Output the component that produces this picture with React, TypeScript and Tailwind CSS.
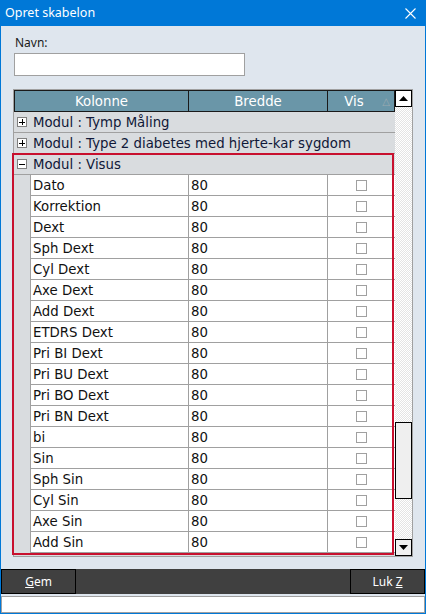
import React from "react";

const groups = ["Modul : Tymp Måling", "Modul : Type 2 diabetes med hjerte-kar sygdom"];
const rows = [
  "Dato", "Korrektion", "Dext", "Sph Dext", "Cyl Dext", "Axe Dext", "Add Dext", "ETDRS Dext",
  "Pri BI Dext", "Pri BU Dext", "Pri BO Dext", "Pri BN Dext", "bi", "Sin", "Sph Sin", "Cyl Sin",
  "Axe Sin", "Add Sin",
];

const gridFont = { fontFamily: '"DejaVu Sans", Verdana, sans-serif' } as const;

function PlusBox({ minus }: { minus?: boolean }) {
  return (
    <div className="w-[10px] h-[10px] border border-[#808080] bg-white flex items-center justify-center relative shrink-0">
      <div className="w-[6px] h-[1px] bg-black" />
      {!minus && <div className="absolute w-[1px] h-[6px] bg-black" />}
    </div>
  );
}

function GroupRow({ label, minus }: { label: string; minus?: boolean }) {
  return (
    <div className="h-[21px] shrink-0 flex items-center bg-[#d9dcdf] border-b border-[#a0a0a0] text-[#101838] text-[13.3px]">
      <div className="w-[19px] shrink-0 flex pl-[3px]">
        <PlusBox minus={minus} />
      </div>
      <span className="whitespace-nowrap pt-[1px]">{label}</span>
    </div>
  );
}

function DataRow({ label }: { label: string }) {
  return (
    <div className="h-[21px] shrink-0 flex bg-[#d9dcdf] text-[13.3px] text-[#111]">
      <div className="w-[16px] shrink-0" />
      <div className="flex flex-1 bg-white border-b border-[#a0a0a0]">
        <div className="w-[159px] shrink-0 border-l border-r border-[#a0a0a0] flex items-center pl-[2px] pt-[1px] whitespace-nowrap">
          {label}
        </div>
        <div className="w-[139px] shrink-0 border-r border-[#a0a0a0] flex items-center pl-[2px] pt-[1px]">80</div>
        <div className="flex-1 flex items-center justify-center">
          <div className="w-[11px] h-[11px] border border-[#a0a0a0] bg-white" />
        </div>
      </div>
    </div>
  );
}

function Arrow({ up }: { up?: boolean }) {
  return (
    <svg width="9" height="5" viewBox="0 0 9 5">
      {up ? <polygon points="0,5 9,5 4.5,0" fill="#000" /> : <polygon points="0,0 9,0 4.5,5" fill="#000" />}
    </svg>
  );
}

export default function App() {
  const ui = { fontFamily: '"Noto Sans", "Open Sans", sans-serif' } as const;
  return (
    <div className="w-[426px] h-[614px] bg-[#0078d7] flex flex-col overflow-hidden" style={ui}>
      <div className="h-[26px] shrink-0 flex items-center justify-between pl-[5px] pr-[10px] text-white text-[12.5px]">
        <span>Opret skabelon</span>
        <svg width="11" height="11" viewBox="0 0 11 11">
          <path d="M0.5 0.5 L10.5 10.5 M10.5 0.5 L0.5 10.5" stroke="#fff" strokeWidth="1.1" />
        </svg>
      </div>
      <div className="flex-1 mx-[1px] mb-[1px] bg-[#dfe6ee] flex flex-col">
        <div className="h-[27px] shrink-0 pl-[14px] pt-[9px] text-[12px] text-[#1a1a1a] leading-[16px]">Navn:</div>
        <div className="ml-[13px] w-[231px] h-[23px] shrink-0 bg-white border border-[#a0a0a0]" />
        <div className="ml-[12px] mt-[13px] w-[400px] h-[468px] shrink-0 border border-[#a0a0a0] flex relative">
          <div className="w-[381px] h-full flex flex-col overflow-hidden bg-[#d9dcdf]" style={gridFont}>
            <div className="h-[22px] shrink-0 flex bg-[#6a96a8] border border-[#1a1a1a] text-white text-[13.3px]">
              <div className="w-[174px] shrink-0 border-r border-[#1a1a1a] flex items-center justify-center pt-[1px]">Kolonne</div>
              <div className="w-[139px] shrink-0 border-r border-[#1a1a1a] flex items-center justify-center pt-[1px]">Bredde</div>
              <div className="flex-1 flex items-center justify-center relative pr-[14px] pt-[1px]">
                <span>Vis</span>
                <span className="absolute right-[4px] top-[3px] text-[10px] text-[#9aa9b0]">△</span>
              </div>
            </div>
            {groups.map((g) => (
              <GroupRow key={g} label={g} />
            ))}
            <GroupRow label="Modul : Visus" minus />
            {rows.map((r) => (
              <DataRow key={r} label={r} />
            ))}
          </div>
          <div className="w-[17px] h-full flex flex-col bg-[repeating-conic-gradient(#ffffff_0%_25%,#e4e4e4_0%_50%)] bg-size-[2px_2px]">
            <div className="h-[17px] shrink-0 border border-black bg-white flex items-center justify-center">
              <Arrow up />
            </div>
            <div className="flex-1 flex flex-col">
              <div className="h-[315px] shrink-0" />
              <div className="h-[77px] shrink-0 border border-black bg-[#efefef]" />
            </div>
            <div className="h-[17px] shrink-0 border border-black bg-[#f0f0f0] flex items-center justify-center">
              <Arrow />
            </div>
          </div>
          <div className="absolute left-[-2px] top-[63px] w-[382px] h-[402px] border-2 border-[#c8102e] pointer-events-none" />
        </div>
        <div className="mt-[12px] h-[25px] shrink-0 bg-[#404040] flex justify-between text-white text-[12px]">
          <div className="w-[75px] border border-black flex items-center justify-center">
            <span><span className="underline">G</span>em</span>
          </div>
          <div className="w-[75px] border border-black flex items-center justify-center">
            <span>Luk <span className="underline">Z</span></span>
          </div>
        </div>
        <div className="mt-[2px] h-[17px] shrink-0 bg-white border border-[#a0a0a0]" />
      </div>
    </div>
  );
}
